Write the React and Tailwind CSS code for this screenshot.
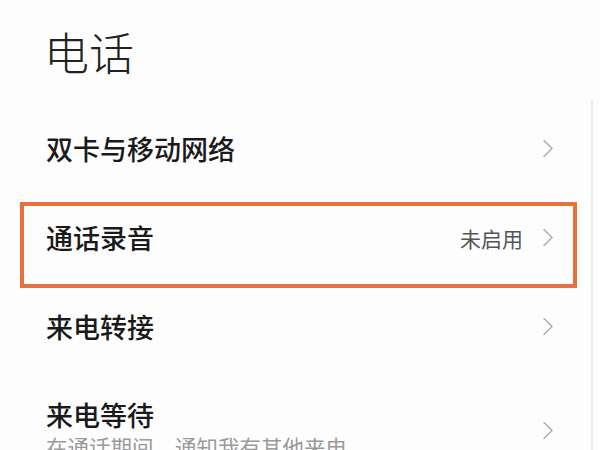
import React from "react";

const font = { fontFamily: '"Noto Sans CJK SC", "Noto Sans", sans-serif' };

const Chevron = () => (
  <svg width="12" height="19" viewBox="0 0 12 19" fill="none" className="shrink-0">
    <path d="M2 1.5 L10 9.5 L2 17.5" stroke="#b0b0b0" strokeWidth="1.6" strokeLinecap="round" strokeLinejoin="round" />
  </svg>
);

const rows = [
  { title: "双卡与移动网络" },
  { title: "通话录音", value: "未启用", marked: true },
  { title: "来电转接" },
  { title: "来电等待", sub: "在通话期间，通知我有其他来电" },
];

export default function App() {
  return (
    <div className="relative w-[600px] h-[450px] overflow-hidden bg-[#fdfdfd] text-[#1a1a1a]" style={font}>
      {/* Page title */}
      <h1 className="pl-[44px] pt-[24px] h-[104px] text-[45px] leading-[56px] font-light text-[#222]">
        电话
      </h1>

      {/* Settings list */}
      <div className="flex flex-col">
        {rows.map((row) =>
          row.sub ? (
            <div key={row.title} className="flex items-center h-[89px] pl-[46px] pr-[46px]">
              <div className="flex-1 flex flex-col pt-[28px]">
                <span className="text-[27px] leading-[34px] font-medium">{row.title}</span>
                <span className="text-[21.5px] leading-[30px] text-[#9a9a9a]">{row.sub}</span>
              </div>
              <div className="pt-[29px]">
                <Chevron />
              </div>
            </div>
          ) : (
            <div key={row.title} className="flex items-center h-[89px] pl-[46px] pr-[46px]">
              <span className="flex-1 text-[27px] leading-[34px] font-medium">{row.title}</span>
              {row.value && (
                <span className="mr-[19px] text-[21px] leading-[28px] text-[#555]">{row.value}</span>
              )}
              <Chevron />
            </div>
          )
        )}
      </div>

      {/* Orange highlight drawn over the call recording row */}
      <div className="absolute left-[20px] top-[202px] w-[557px] h-[86px] border-[4px] border-[#e8703e] pointer-events-none" />

      {/* Scroll edge */}
      <div className="absolute right-[7px] top-[100px] bottom-0 w-[2px] bg-[#ececec]" />
    </div>
  );
}
